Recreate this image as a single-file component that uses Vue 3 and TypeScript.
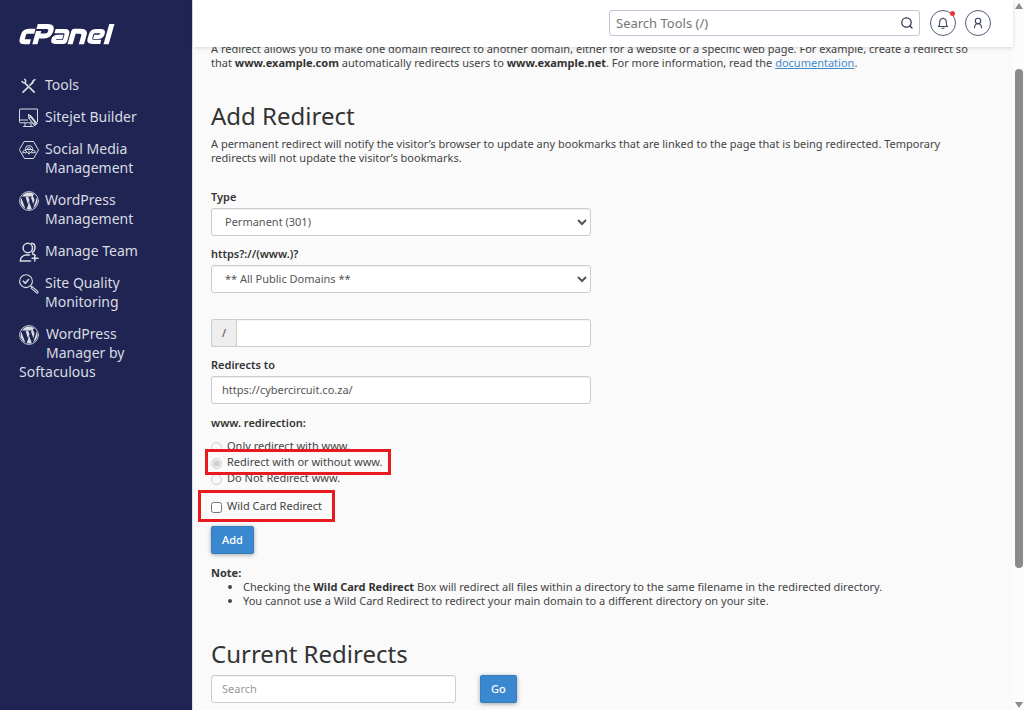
<script setup lang="ts">
import { ref } from 'vue'

type IconName = 'tools' | 'sitejet' | 'social' | 'wordpress' | 'team' | 'quality'
interface NavItem {
  icon: IconName
  lines: string[]
  tail?: string
}

const nav: NavItem[] = [
  { icon: 'tools', lines: ['Tools'] },
  { icon: 'sitejet', lines: ['Sitejet Builder'] },
  { icon: 'social', lines: ['Social Media', 'Management'] },
  { icon: 'wordpress', lines: ['WordPress', 'Management'] },
  { icon: 'team', lines: ['Manage Team'] },
  { icon: 'quality', lines: ['Site Quality', 'Monitoring'] },
  { icon: 'wordpress', lines: ['WordPress', 'Manager by'], tail: 'Softaculous' },
]

const redirectType = ref('permanent')
const domain = ref('all')
const path = ref('')
const target = ref('https://cybercircuit.co.za/')
const wwwMode = ref('either')
const wildcard = ref(false)
</script>

<template>
  <div class="app">
    <aside class="sidebar">
      <a class="logo" href="#" aria-label="cPanel">
        <svg viewBox="0 0 96 22" width="96" height="22" fill="none" stroke="#fff" stroke-width="4.9" stroke-linejoin="round">
          <g transform="translate(5.5 0) skewX(-16) scale(1.06 1)">
            <path d="M12 8.2H5.5Q2.2 8.2 2.2 11.5V15.5Q2.2 18.8 5.5 18.8H10.5" />
            <path d="M15.5 21.2V8M12.8 3.5H22.5Q27 3.5 27 8Q27 13 22.5 13H18" />
            <path d="M31 8.2H39.5Q43 8.2 43 11.5V18.8H34.5Q31.9 18.8 31.9 16.3Q31.9 13.9 34.5 13.9H40" stroke-width="4.3" />
            <path d="M48.7 21.2V8.2H55Q59.4 8.2 59.4 12.5V21.2" />
            <path d="M77 18.8H69.5Q65.9 18.8 65.9 15.5V11.5Q65.9 8.2 69.5 8.2H73.5Q76.5 8.2 76.5 11Q76.5 13.9 73.5 13.9H69" stroke-width="4.3" />
            <path d="M82.7 21.2V1" />
          </g>
        </svg>
      </a>
      <nav>
        <ul class="nav">
          <li v-for="(item, i) in nav" :key="i">
            <a href="#" class="nav-link">
              <span class="nav-main" :class="{ wide: item.tail }">
                <svg class="nav-icon" viewBox="0 0 20 20" width="20" height="20" fill="none" stroke="currentColor" stroke-linecap="round" stroke-linejoin="round">
                  <template v-if="item.icon === 'tools'">
                    <path d="M6 7.2L15.2 16.2" stroke-width="1.7" />
                    <path d="M3 5.5Q4.5 7.5 6.2 6.3Q7.5 4.8 5.7 3.2" stroke-width="1.5" />
                    <path d="M4 16.2L8.7 11.7M11 9.2L14 6.3" stroke-width="1.7" />
                    <path d="M13.3 6.7L14 5L16 3.7" stroke-width="1.5" />
                  </template>
                  <template v-else-if="item.icon === 'sitejet'">
                    <path d="M12 14.8H1.5Q.5 14.8.5 13.8V2Q.5 1 1.5 1H18.5V14M1 12H8.5M6 15V18M4.5 18.5H14M12 15V18" />
                    <path d="M9.5 6.5L9.8 10L15.5 17.5L18 15.5L12.5 8.5ZM10.5 9.5L12.5 8.5M15 15.5L17 14M12 9.5L17 15.5" stroke-width="1.1" />
                  </template>
                  <template v-else-if="item.icon === 'social'">
                    <path d="M5.5 1.5H14.5L19.5 10L14.5 18.5H5.5L.5 10Z" />
                    <path d="M6.5 9.5V8.3Q6.5 5.7 10 5.7Q13.5 5.7 13.5 8.3V9.5M8.2 9.2Q8.2 7.7 10 7.7Q11.8 7.7 11.8 9.2M3.7 12.3Q3.7 10.3 5.7 10.3Q7.7 10.3 7.7 12.3ZM12.3 12.3Q12.3 10.3 14.3 10.3Q16.3 10.3 16.3 12.3ZM6.5 9.5H13.5M10 11V14M8.5 12.5L10 14L11.5 12.5" />
                  </template>
                  <template v-else-if="item.icon === 'wordpress'">
                    <circle cx="10" cy="10" r="9.4" stroke-width=".9" />
                    <path fill="currentColor" stroke="none" d="M10 1.6A8.4 8.4 0 0 0 3 5.4H7.6V6.1L6.6 6.3L9 13.6L10.5 9.2L9.5 6.3L8.5 6.1V5.4H13V6.1L11.9 6.3L14.3 13.3L15.2 10.1C16.2 7.3 13.9 6.5 14 5C14.1 4 14.9 3.5 15.7 3.8A8.4 8.4 0 0 0 10 1.6ZM2.3 6.7A8.4 8.4 0 0 0 6.3 17.5ZM10.2 11L7.7 18.1Q10.2 18.8 12.8 17.9ZM17.4 6C17.7 9.2 15.4 13.5 14.2 17.2A8.4 8.4 0 0 0 17.4 6Z" />
                  </template>
                  <template v-else-if="item.icon === 'team'">
                    <circle cx="8.8" cy="6" r="4.7" stroke-width="1.5" />
                    <path d="M12.5 1.3Q16.2 1.5 16 6Q15.8 9 13.5 10.5M11.5 19H1.2C1.2 15.5 4 13 7.5 13H10.5M13.5 12Q15.5 12.5 16.2 13.5M15.8 13.5V19M13 16.2H19" stroke-width="1.5" />
                  </template>
                  <template v-else>
                    <circle cx="7" cy="7.2" r="6.4" stroke-width="1.1" />
                    <path d="M4.3 7.2L6.3 9.2L9.5 5.5" stroke-width="1.6" />
                    <path d="M11.7 12L13 13.2M13.2 12.7L18.7 17.5Q19.5 19 18 19.3L12.2 14.2Z" stroke-width="1.1" />
                  </template>
                </svg>
                <span class="nav-text"><span v-for="line in item.lines" :key="line">{{ line }}</span></span>
              </span>
              <span v-if="item.tail">{{ item.tail }}</span>
            </a>
          </li>
        </ul>
      </nav>
    </aside>

    <div class="page">
      <header class="topbar">
        <form class="tool-search" role="search" @submit.prevent>
          <input type="text" placeholder="Search Tools (/)" aria-label="Search Tools" />
          <button type="submit" aria-label="Search">
            <svg viewBox="0 0 14 14" width="14" height="14" fill="none" stroke="#2b3350" stroke-width="1.2" stroke-linecap="round"><circle cx="6.5" cy="6.5" r="4.7" /><path d="M10 10L12 12" /></svg>
          </button>
        </form>
        <button class="round" type="button" aria-label="Notifications">
          <svg viewBox="0 0 14 14" width="14" height="14" fill="none" stroke="#3b4365" stroke-width="1.1" stroke-linejoin="round"><path d="M2.5 10.5Q3.7 9.5 3.7 7.5V6Q3.7 2.5 7 2.5Q10.3 2.5 10.3 6V7.5Q10.3 9.5 11.5 10.5ZM5.5 12.3H8.5M7 1.5V2.5" /></svg>
          <span class="dot"></span>
        </button>
        <button class="round" type="button" aria-label="Account">
          <svg viewBox="0 0 14 14" width="14" height="14" fill="none" stroke="#3b4365" stroke-width="1.1" stroke-linecap="round"><circle cx="7" cy="5" r="2.7" /><path d="M3.5 11.8Q3.5 7.8 7 7.8Q10.5 7.8 10.5 11.8" /></svg>
        </button>
      </header>

      <main class="content">
        <p class="intro">
          A redirect allows you to make one domain redirect to another domain, either for a website or a specific web page. For example, create a redirect so that <strong>www.example.com</strong> automatically redirects users to <strong>www.example.net</strong>. For more information, read the <a href="#">documentation</a>.
        </p>

        <h2>Add Redirect</h2>
        <p class="lead">A permanent redirect will notify the visitor’s browser to update any bookmarks that are linked to the page that is being redirected. Temporary redirects will not update the visitor’s bookmarks.</p>

        <form class="redirect-form" @submit.prevent>
          <div class="field">
            <label for="type">Type</label>
            <select id="type" v-model="redirectType" class="control">
              <option value="permanent">Permanent (301)</option>
            </select>
          </div>
          <div class="field">
            <label for="domain">https?://(www.)?</label>
            <select id="domain" v-model="domain" class="control">
              <option value="all">** All Public Domains **</option>
            </select>
          </div>
          <div class="group">
            <label for="path">/</label>
            <input id="path" v-model="path" class="control" type="text" />
          </div>
          <div class="field">
            <label for="target">Redirects to</label>
            <input id="target" v-model="target" class="control" type="text" />
          </div>
          <fieldset>
            <legend>www. redirection:</legend>
            <label class="choice"><input v-model="wwwMode" type="radio" name="www" value="only" disabled /><span>Only redirect with www.</span></label>
            <label class="choice marked"><input v-model="wwwMode" type="radio" name="www" value="either" disabled /><span>Redirect with or without www.</span></label>
            <label class="choice"><input v-model="wwwMode" type="radio" name="www" value="none" disabled /><span>Do Not Redirect www.</span></label>
          </fieldset>
          <label class="choice wildcard marked"><input v-model="wildcard" type="checkbox" /><span>Wild Card Redirect</span></label>
          <button class="btn" type="submit">Add</button>
        </form>

        <section class="note">
          <strong>Note:</strong>
          <ul>
            <li>Checking the <strong>Wild Card Redirect</strong> Box will redirect all files within a directory to the same filename in the redirected directory.</li>
            <li>You cannot use a Wild Card Redirect to redirect your main domain to a different directory on your site.</li>
          </ul>
        </section>

        <h2>Current Redirects</h2>
        <form class="list-search" @submit.prevent>
          <input class="control" type="text" placeholder="Search" aria-label="Search redirects" />
          <button class="btn" type="submit">Go</button>
        </form>
      </main>
    </div>

    <div class="scrollbar" aria-hidden="true">
      <span class="arrow up"></span>
      <span class="track"><span class="thumb"></span></span>
      <span class="arrow down"></span>
    </div>
  </div>
</template>

<style>
html,
body {
  overflow: hidden;
}
</style>

<style scoped>
.app,
.app * {
  box-sizing: border-box;
}
.app {
  display: flex;
  height: 100vh;
  overflow: hidden;
  background: #fafafa;
  color: #444;
  font: 11px/14px "Noto Sans", sans-serif;
}
input,
select,
button {
  font: inherit;
  color: inherit;
}
.sidebar {
  flex: 0 0 192px;
  padding: 23px 19px;
  background: #1f2452;
  color: #d9dce3;
  font-size: 14px;
  line-height: 19px;
}
.logo {
  display: block;
  height: 24px;
}
.nav {
  display: flex;
  flex-direction: column;
  gap: 13px;
  margin: 28px 0 0;
  padding: 0;
  list-style: none;
}
.nav-link {
  display: block;
  color: inherit;
  text-decoration: none;
}
.nav-main {
  display: flex;
  gap: 6px;
}
.nav-main.wide {
  gap: 7px;
}
.nav-icon {
  flex: none;
  margin: 1px 0 -2px;
}
.nav-text {
  display: flex;
  flex-direction: column;
  white-space: nowrap;
}
.page {
  display: flex;
  flex: 1;
  flex-direction: column;
  min-width: 0;
  border-left: 1px solid #dcdfe9;
}
.topbar {
  z-index: 1;
  display: flex;
  flex: none;
  align-items: center;
  justify-content: flex-end;
  gap: 9px;
  height: 47px;
  padding: 0 22px 1px 0;
  background: #fff;
  box-shadow: 0 1px 4px rgba(0, 0, 0, 0.14);
}
.tool-search {
  display: flex;
  align-items: center;
  flex: 0 1 311px;
  height: 26px;
  margin-right: 1px;
  padding: 0 5px 0 6px;
  border: 1px solid #c3c5d4;
  border-radius: 3px;
}
.tool-search input {
  flex: 1;
  min-width: 0;
  padding: 0;
  border: 0;
  outline: 0;
  background: none;
  font-size: 13px;
  line-height: 18px;
}
.tool-search input::placeholder {
  color: #757575;
}
.tool-search button {
  display: flex;
  padding: 0;
  border: 0;
  background: none;
}
.round {
  position: relative;
  display: flex;
  align-items: center;
  justify-content: center;
  width: 26px;
  height: 26px;
  padding: 0;
  border: 1px solid #555c7c;
  border-radius: 50%;
  background: #fff;
}
.dot {
  position: absolute;
  top: 0;
  right: 0;
  width: 5px;
  height: 5px;
  border-radius: 50%;
  background: #e8353b;
}
.content {
  flex: 1;
  min-height: 0;
  margin-top: -5px;
  padding: 0 32px 0 18px;
  overflow: hidden;
}
p {
  margin: 0;
}
strong {
  color: #333;
}
.intro a {
  color: #428bca;
}
h2 {
  margin: 29px 0 5px;
  color: #333;
  font-size: 24px;
  line-height: 33px;
  font-weight: 400;
}
.redirect-form {
  display: flex;
  flex-direction: column;
  align-items: flex-start;
  margin-top: 25px;
}
.field,
.group {
  width: 100%;
  max-width: 380px;
  margin-bottom: 11px;
}
.field label,
legend {
  display: block;
  margin-bottom: 4px;
  padding: 0;
  color: #333;
  font-weight: 600;
}
.control {
  display: block;
  width: 100%;
  height: 28px;
  padding: 0 10px 2px;
  border: 1px solid #ccc;
  border-radius: 3px;
  background: #fff;
  color: #555;
  box-shadow: inset 0 1px 1px rgba(0, 0, 0, 0.05);
}
select.control {
  padding: 0 0 2px 9px;
}
.control::placeholder {
  color: #999;
}
.group {
  display: flex;
  margin-top: 15px;
}
.group label {
  display: flex;
  align-items: center;
  justify-content: center;
  flex: 0 0 25px;
  border: 1px solid #ccc;
  border-right: 0;
  border-radius: 3px 0 0 3px;
  background: #eee;
}
.group .control {
  border-radius: 0 3px 3px 0;
}
fieldset {
  display: flex;
  flex-direction: column;
  align-items: flex-start;
  margin: 1px 0 0;
  padding: 0;
  border: 0;
}
legend {
  margin-bottom: 8px;
}
.choice {
  display: flex;
  align-items: center;
  gap: 5px;
  height: 16px;
}
.choice input {
  width: 11px;
  height: 11px;
  margin: 2px 0 0;
}
.marked {
  z-index: 1;
  height: 26px;
  margin: -5px 0 -5px -6px;
  padding: 0 6px 0 3px;
  border: 3px solid #e81a1f;
  background: #fafafa;
}
.wildcard {
  height: 32px;
  margin: 4px 0 4px -13px;
  padding: 0 10px;
}
.btn {
  height: 28px;
  padding: 0 10px;
  border: 1px solid #357ebd;
  border-radius: 2px;
  background: #3a89d0;
  color: #fff;
  font-weight: 500;
  box-shadow: 0 1px 4px rgba(0, 0, 0, 0.35);
}
.note {
  margin-top: 12px;
}
.note ul {
  margin: 0;
  padding-left: 32px;
}
.list-search {
  display: flex;
  gap: 24px;
}
.list-search .control {
  flex: 0 1 245px;
}
.scrollbar {
  display: flex;
  flex-direction: column;
  align-items: center;
  flex: 0 0 11px;
  padding: 3px 0 2px;
  background: #fcfcfc;
}
.track {
  flex: 1;
  width: 8px;
}
.thumb {
  display: block;
  width: 8px;
  height: 72%;
  margin-top: 60px;
  border-radius: 4px;
  background: #8b8b8b;
}
.arrow {
  border: 4px solid transparent;
}
.up {
  border-top: 0;
  border-bottom: 6px solid #8b8b8b;
}
.down {
  border-bottom: 0;
  border-top: 6px solid #8b8b8b;
}
</style>
